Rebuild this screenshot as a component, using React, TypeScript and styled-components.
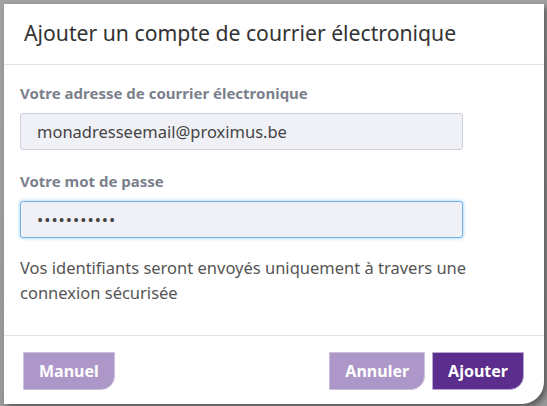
import styled, { createGlobalStyle } from "styled-components";

const GlobalStyle = createGlobalStyle`
    html, body {
        margin: 0;
        padding: 0;
        background: #9d9d9d;
        font-family: "Noto Sans", "Open Sans", sans-serif;
    }
`

interface ButtonProps {
    $primary?: boolean;
}

function App() {
    return (
        <>
            <GlobalStyle />
            <Backdrop>
                <Dialog>
                    <Header>
                        <Title>Ajouter un compte de courrier électronique</Title>
                    </Header>
                    <Body>
                        <Field>
                            <Label>Votre adresse de courrier électronique</Label>
                            <Input type="text" defaultValue="monadresseemail@proximus.be" readOnly />
                        </Field>
                        <Field>
                            <Label>Votre mot de passe</Label>
                            <Input type="password" defaultValue="motdepasse1" readOnly $focused />
                        </Field>
                        <Notice>
                            Vos identifiants seront envoyés uniquement à travers une connexion sécurisée
                        </Notice>
                    </Body>
                    <Footer>
                        <Button>Manuel</Button>
                        <Actions>
                            <Button>Annuler</Button>
                            <Button $primary>Ajouter</Button>
                        </Actions>
                    </Footer>
                </Dialog>
            </Backdrop>
        </>
    )
}

const Backdrop = styled.div`
    width: 547px;
    height: 406px;
    padding: 4px 0 0 4px;
    box-sizing: border-box;
    background: linear-gradient(180deg, #a3a3a3 0%, #9a9a9a 100%);
`

const Dialog = styled.div`
    width: 540px;
    height: 400px;
    background: #ffffff;
    border-bottom-right-radius: 22px;
    box-shadow: 3px 3px 6px rgba(0, 0, 0, 0.45);
    display: flex;
    flex-direction: column;
`

const Header = styled.div`
    height: 61px;
    box-sizing: border-box;
    padding: 14px 20px 0;
    border-bottom: 1px solid #e2e2e2;
`

const Title = styled.h1`
    margin: 0;
    font-size: 21.2px;
    font-weight: 400;
    color: #333333;
    line-height: 30px;
`

const Body = styled.div`
    flex: 1;
    padding: 18px 16px 0;
    border-bottom: 1px solid #e2e2e2;
`

const Field = styled.div`
    display: flex;
    flex-direction: column;
    margin-bottom: 21px;
`

const Label = styled.label`
    font-size: 15px;
    font-weight: 700;
    color: #7b808c;
    line-height: 20px;
    margin-bottom: 10px;
`

const Input = styled.input<{ $focused?: boolean }>`
    width: 443px;
    height: 37px;
    box-sizing: border-box;
    padding: 0 16px;
    font-family: inherit;
    font-size: 16.5px;
    color: #444444;
    background: #f0f1f6;
    border: 1px solid ${p => p.$focused ? "#74b3ea" : "#cdd0dc"};
    border-radius: 3px;
    box-shadow: ${p => p.$focused ? "0 0 3px 1px rgba(116, 179, 234, 0.45)" : "none"};
    outline: none;
    letter-spacing: ${p => p.$focused ? "1px" : "0"};
`

const Notice = styled.p`
    margin: -4px 0 0;
    font-size: 16.5px;
    line-height: 25px;
    color: #555555;
    width: 480px;
`

const Footer = styled.div`
    height: 68px;
    box-sizing: border-box;
    padding: 16px 20px 0 19px;
    display: flex;
    justify-content: space-between;
    align-items: flex-start;
`

const Actions = styled.div`
    display: flex;
    gap: 7px;
`

const Button = styled.button<ButtonProps>`
    height: 38px;
    padding: 0 15px;
    font-family: inherit;
    font-size: 16px;
    font-weight: 700;
    color: #ffffff;
    background: ${p => p.$primary ? "#5b2d8d" : "#ad97c9"};
    border: 1px solid ${p => p.$primary ? "#b9a8d1" : "#cbbfdd"};
    border-radius: 0 0 14px 0;
    cursor: pointer;
`

export default App;
